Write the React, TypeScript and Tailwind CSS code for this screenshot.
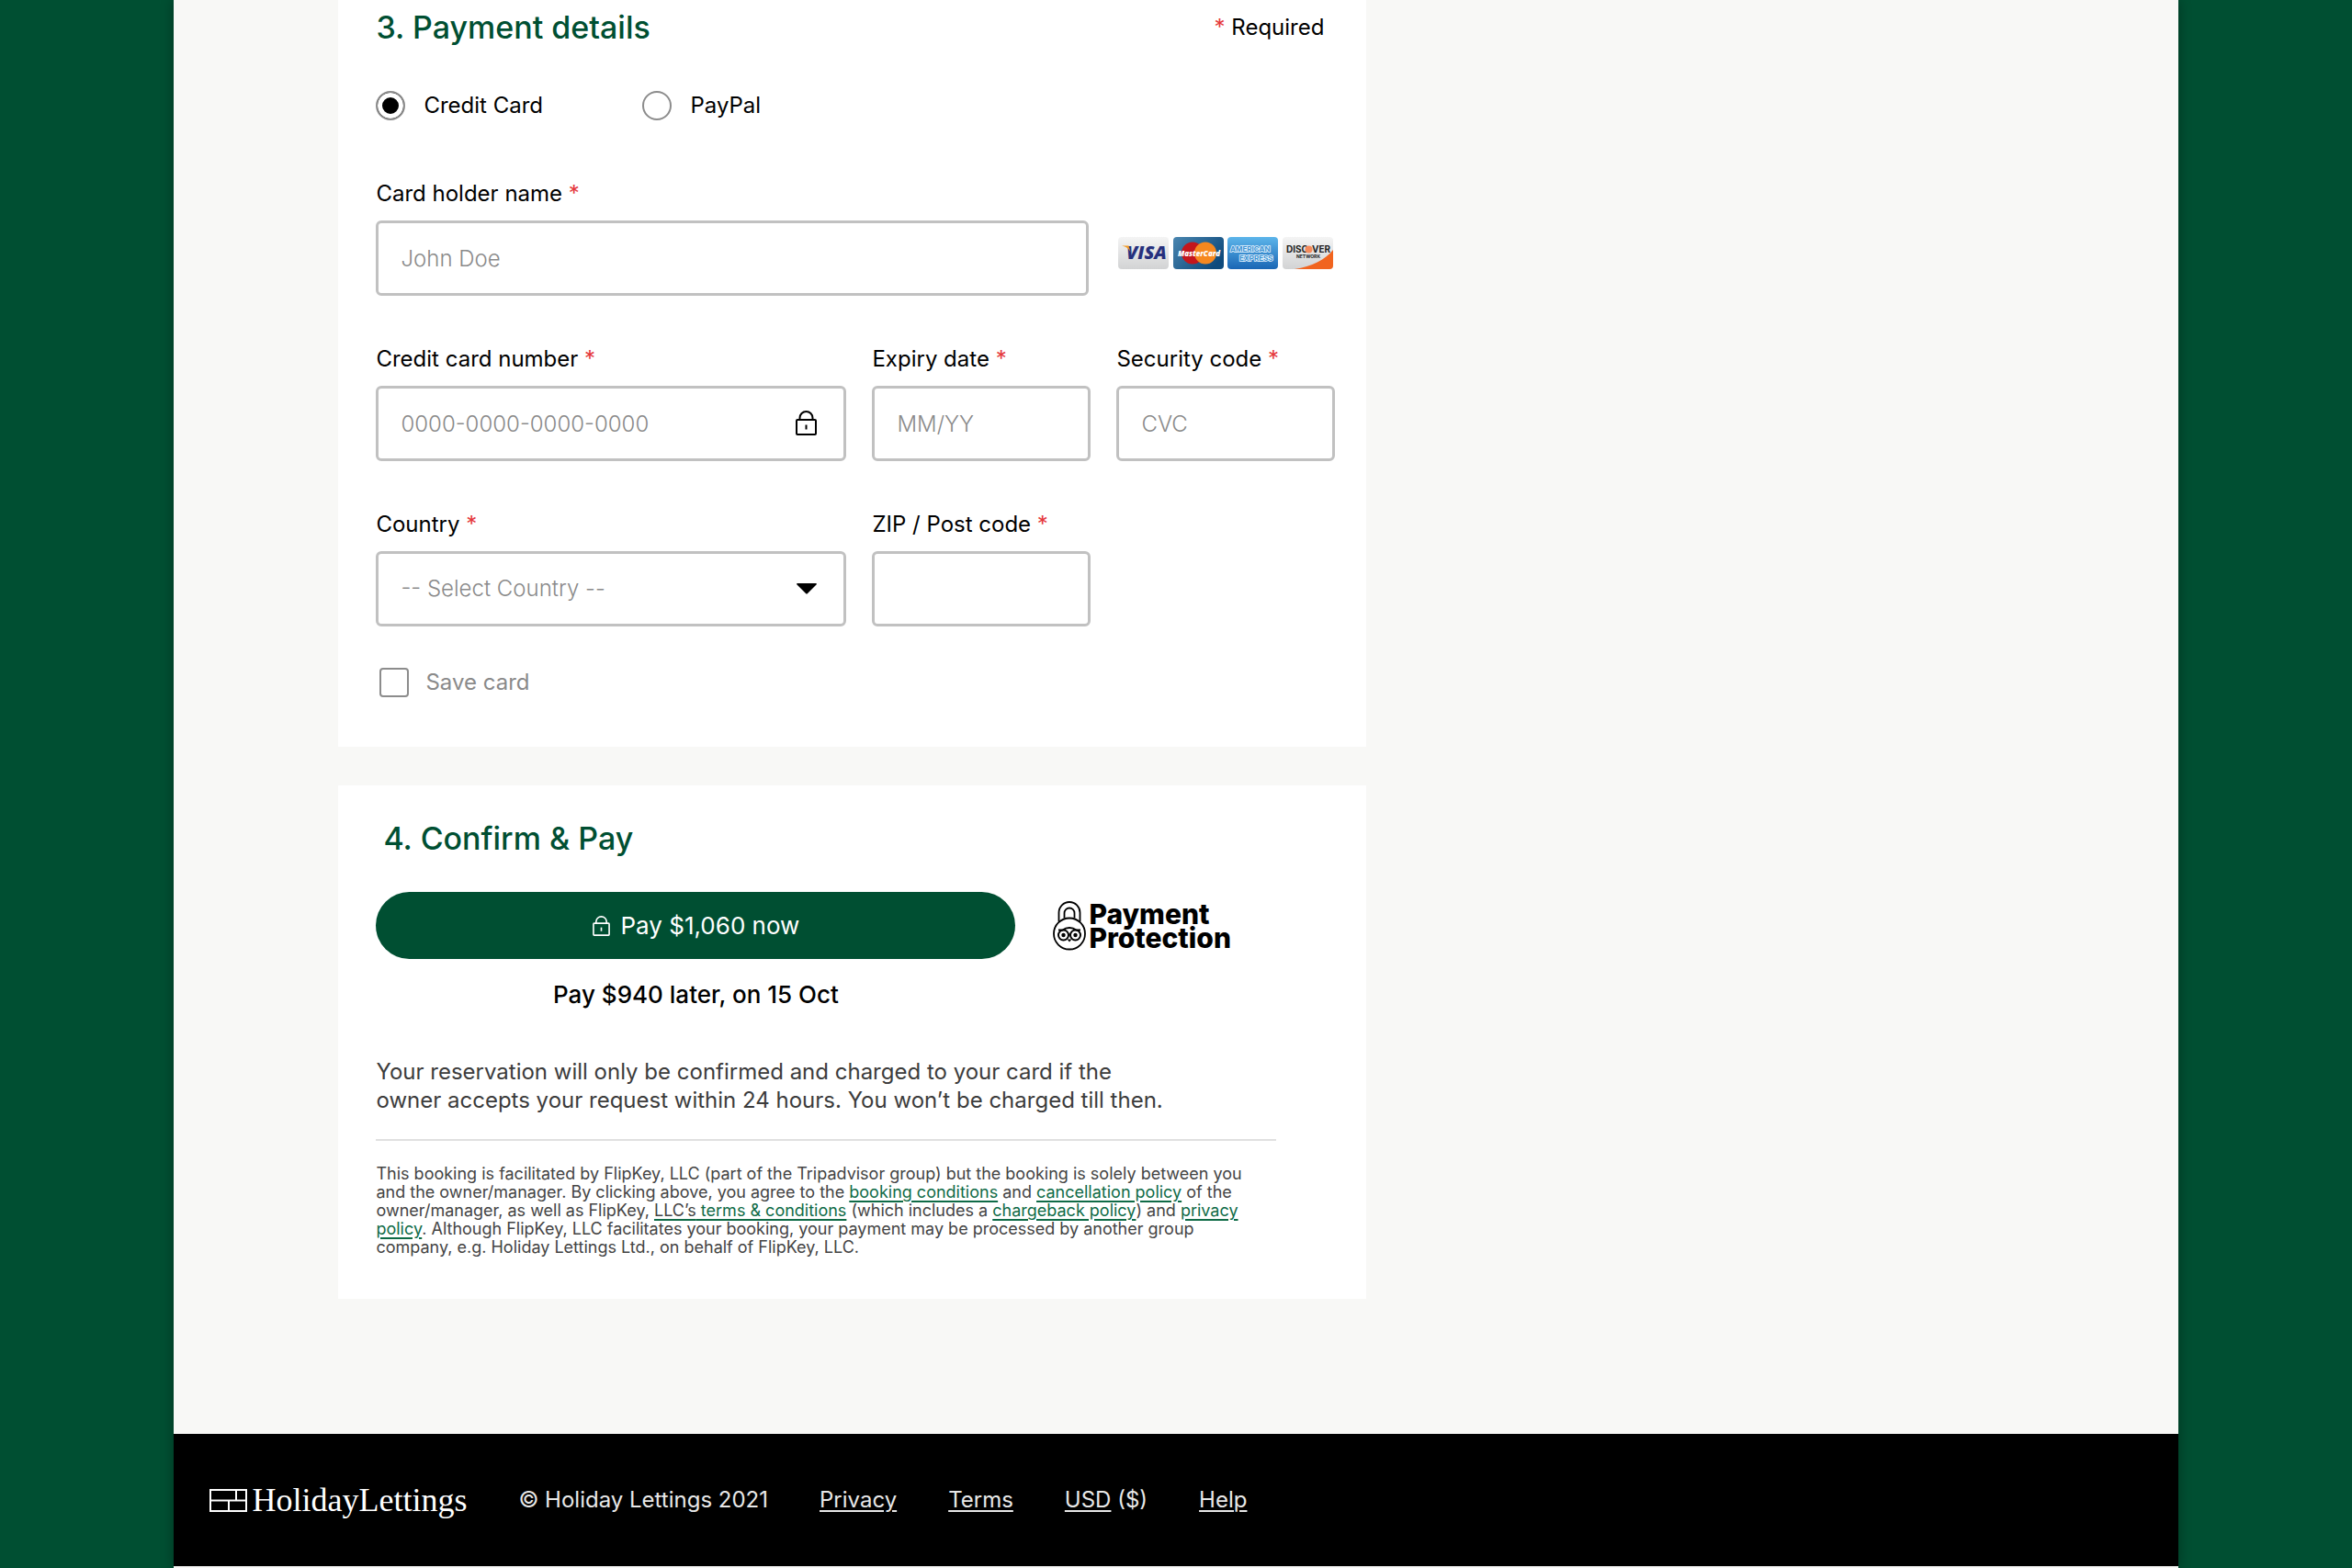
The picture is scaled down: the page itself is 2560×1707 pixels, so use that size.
import type { ReactNode } from "react";

const inputStyle =
  "h-[82px] w-full rounded-md border-3 border-[#c1c1c1] bg-transparent px-6 text-[24px] font-light text-[#8a8a8a] placeholder:text-[#8a8a8a] outline-none";

const footerLinks = ["Privacy", "Terms", "USD", "Help"];

const Star = () => <span className="text-[#e5383b]">*</span>;

const LockIcon = ({ className }: { className: string }) => (
  <svg
    viewBox="0 0 23 27"
    fill="none"
    stroke="currentColor"
    strokeWidth="2"
    strokeLinejoin="round"
    className={className}
    aria-hidden="true">
    <rect x="1" y="10" width="21" height="16" rx="1" />
    <path d="M4.5 10V8a7 7 0 0 1 14 0v2" />
    <path d="M11.5 15.5v5" />
  </svg>
);

const Field = ({
  id,
  label,
  children,
}: {
  id: string;
  label: string;
  children: ReactNode;
}) => (
  <div className="flex flex-col gap-[15px]">
    <label htmlFor={id} className="text-[24px] leading-7">
      {label} <Star />
    </label>
    {children}
  </div>
);

const CardLogos = () => (
  <svg viewBox="0 0 236 36" className="h-9 w-[236px]" role="img" aria-label="Accepted cards">
    <defs>
      <linearGradient id="silver" x1="0" y1="0" x2="0" y2="1">
        <stop offset="0" stopColor="#f4f4f4" />
        <stop offset="1" stopColor="#d2d3d4" />
      </linearGradient>
      <linearGradient id="navy" x1="0" y1="0" x2="1" y2="0.6">
        <stop offset="0" stopColor="#4a86b0" />
        <stop offset="1" stopColor="#0e4a7c" />
      </linearGradient>
      <linearGradient id="sky" x1="0" y1="0" x2="0" y2="1">
        <stop offset="0" stopColor="#5cb5ea" />
        <stop offset="1" stopColor="#1a66b5" />
      </linearGradient>
      <clipPath id="discover">
        <rect x="179" width="55" height="35" rx="4" />
      </clipPath>
    </defs>
    {/* Visa */}
    <rect width="55" height="35" rx="4" fill="url(#silver)" />
    <text
      x="9"
      y="24"
      fontFamily="Open Sans, sans-serif"
      fontSize="20"
      fontWeight="800"
      fontStyle="italic"
      fill="#26307d">
      VISA
    </text>
    <path d="M4 9.500h7.500l2 7C12 13 9 10.500 4 9.500z" fill="#f19a22" />
    {/* MasterCard */}
    <rect x="60" width="55" height="35" rx="4" fill="url(#navy)" />
    <circle cx="81" cy="17.500" r="12" fill="#c4161c" />
    <circle cx="95" cy="17.500" r="12" fill="#f6881f" />
    <text
      x="88"
      y="21"
      textAnchor="middle"
      fontFamily="Open Sans, sans-serif"
      fontSize="8"
      fontWeight="800"
      fontStyle="italic"
      fill="#fff">
      MasterCard
    </text>
    {/* American Express */}
    <rect x="119" width="55" height="35" rx="4" fill="url(#sky)" />
    <g
      fontFamily="Inter, sans-serif"
      fontSize="9"
      fontWeight="700"
      fill="#3e93d3"
      stroke="#e8f5ff"
      strokeWidth="1.500"
      paintOrder="stroke">
      <text x="122" y="16" fontSize="8">
        AMERICAN
      </text>
      <text x="132" y="26" fontSize="8">
        EXPRESS
      </text>
    </g>
    {/* Discover */}
    <g clipPath="url(#discover)">
      <rect x="179" width="55" height="35" fill="url(#silver)" />
      <path d="M234 14v21h-42c19-3 33-10 42-21z" fill="#f1641f" />
    </g>
    <g fontFamily="Inter, sans-serif" fontWeight="700" fill="#222">
      <text x="183" y="17" fontSize="10">
        DISC
      </text>
      <text x="211" y="17" fontSize="10">
        VER
      </text>
      <text x="194" y="23" fontSize="5">
        NETWORK
      </text>
    </g>
    <circle cx="207.500" cy="13.500" r="4" fill="#f58a5c" />
  </svg>
);

const PaymentProtection = () => (
  <div className="flex items-center gap-[3px]">
    <svg viewBox="0 0 36 54" className="h-[54px] w-9" fill="none" stroke="#000" aria-hidden="true">
      <path d="M6.500 22V12.500a11.500 11.500 0 0 1 23 0V22" strokeWidth="1.800" />
      <path d="M12.500 18.500V13a5.500 5.500 0 0 1 11 0v5.500" strokeWidth="1.800" />
      <circle cx="18" cy="35.500" r="17" strokeWidth="1.800" fill="#fff" />
      <path d="M6 31.500h4.500c4.500-3.500 10.500-3.500 15 0H30" strokeWidth="2" />
      <circle cx="11.500" cy="37" r="5.500" strokeWidth="2" />
      <circle cx="24.500" cy="37" r="5.500" strokeWidth="2" />
      <circle cx="11.500" cy="37" r="2.200" fill="#000" stroke="none" />
      <circle cx="24.500" cy="37" r="2.200" fill="#000" stroke="none" />
      <path d="M15.500 41.500l2.500 3 2.500-3z" fill="#000" stroke="none" />
    </svg>
    <p className="text-[30px] leading-[26px] font-extrabold">
      Payment
      <br />
      Protection
    </p>
  </div>
);

const PaymentMethod = ({ label, checked }: { label: string; checked?: boolean }) => (
  <label className="flex items-center gap-5 text-[24px] leading-8">
    <input
      type="radio"
      name="method"
      defaultChecked={checked}
      className="size-8 appearance-none rounded-full border-2 border-[#8c8c8c] bg-white checked:bg-black checked:shadow-[inset_0_0_0_5px_#fff]"
    />
    {label}
  </label>
);

const PolicyLink = ({ children }: { children: ReactNode }) => (
  <a href="#" className="text-[#0f6b47] underline decoration-2 underline-offset-3">
    {children}
  </a>
);

const PaymentDetails = () => (
  <section className="bg-white pt-2.5 pr-[34px] pb-[54px] pl-[41px]">
    <div className="flex items-center justify-between pr-3">
      <h2 className="text-[34px] leading-10 font-medium text-[#004f32]">3. Payment details</h2>
      <p className="text-[24px] leading-8">
        <Star /> Required
      </p>
    </div>
    <div className="mt-[49px] grid grid-cols-[290px_1fr]">
      <PaymentMethod label="Credit Card" checked />
      <PaymentMethod label="PayPal" />
    </div>
    <form className="mt-[66px] flex flex-col gap-[55px]">
      <div className="grid grid-cols-[1fr_236px] items-end gap-8">
        <Field id="holder" label="Card holder name">
          <input id="holder" placeholder="John Doe" className={inputStyle} />
        </Field>
        <div className="pb-7">
          <CardLogos />
        </div>
      </div>
      <div className="grid grid-cols-[1fr_238px_238px] gap-x-7">
        <Field id="number" label="Credit card number">
          <div className="relative">
            <input id="number" placeholder="0000-0000-0000-0000" className={inputStyle} />
            <LockIcon className="absolute top-[27px] right-8 h-[27px] w-[23px]" />
          </div>
        </Field>
        <Field id="expiry" label="Expiry date">
          <input id="expiry" placeholder="MM/YY" className={inputStyle} />
        </Field>
        <Field id="cvc" label="Security code">
          <input id="cvc" placeholder="CVC" className={inputStyle} />
        </Field>
      </div>
      <div className="grid grid-cols-[1fr_238px_238px] gap-x-7">
        <Field id="country" label="Country">
          <div className="relative">
            <select id="country" className={`${inputStyle} appearance-none`}>
              <option>-- Select Country --</option>
            </select>
            <svg
              viewBox="0 0 22 12"
              className="pointer-events-none absolute top-[35px] right-8 h-3 w-[22px]"
              aria-hidden="true">
              <path d="M1 0h20q1.500.5.500 1.500l-9.500 9.500q-1 1-2 0L.5 1.500Q-.5.5 1 0z" />
            </svg>
          </div>
        </Field>
        <Field id="zip" label="ZIP / Post code">
          <input id="zip" className={inputStyle} />
        </Field>
      </div>
    </form>
    <label className="mt-[45px] ml-1 flex w-fit items-center gap-[18px] text-[24px] leading-8 text-[#8a8a8a]">
      <input
        type="checkbox"
        className="size-8 appearance-none rounded-sm border-2 border-[#8c8c8c] bg-white"
      />
      Save card
    </label>
  </section>
);

const ConfirmAndPay = () => (
  <section className="mt-[42px] bg-white pt-[38px] pr-[34px] pb-[46px] pl-[41px]">
    <h2 className="ml-2 text-[34px] leading-10 font-medium text-[#004f32]">4. Confirm &amp; Pay</h2>
    <div className="mt-[38px] grid grid-cols-[696px_1fr] items-center gap-x-[41px]">
      <button className="flex h-[73px] items-center justify-center gap-3 rounded-full bg-[#004f32] text-[26px] text-white">
        <LockIcon className="h-[22px] w-[19px]" />
        Pay $1,060 now
      </button>
      <PaymentProtection />
      <p className="mt-[23px] text-center text-[26px] leading-8 font-medium">
        Pay $940 later, on 15 Oct
      </p>
    </div>
    <p className="mt-[52px] text-[24px] leading-[31px] text-[#3c3c3c]">
      Your reservation will only be confirmed and charged to your card if the
      <br />
      owner accepts your request within 24 hours. You won’t be charged till then.
    </p>
    <div className="mt-[27px] max-w-[980px] border-t-2 border-[#e0e0e0] pt-[26px] text-[18px] leading-5 text-[#444]">
      This booking is facilitated by FlipKey, LLC (part of the Tripadvisor group) but the booking is
      solely between you
      <br />
      and the owner/manager. By clicking above, you agree to the{" "}
      <PolicyLink>booking conditions</PolicyLink> and <PolicyLink>cancellation policy</PolicyLink>{" "}
      of the
      <br />
      owner/manager, as well as FlipKey,{" "}
      <PolicyLink>
        <span className="text-[#444]">LLC’s</span> terms &amp; conditions
      </PolicyLink>{" "}
      (which includes a <PolicyLink>chargeback policy</PolicyLink>) and{" "}
      <PolicyLink>
        privacy
        <br />
        policy
      </PolicyLink>
      . Although FlipKey, LLC facilitates your booking, your payment may be processed by another
      group
      <br />
      company, e.g. Holiday Lettings Ltd., on behalf of FlipKey, LLC.
    </div>
  </section>
);

const Footer = () => (
  <footer className="flex h-36 items-center gap-14 bg-black px-[39px] text-[24px] text-[#e8e8e8]">
    <a href="#" className="flex items-center gap-[5px] text-white">
      <svg
        viewBox="0 0 41 25"
        fill="none"
        stroke="currentColor"
        strokeWidth="2"
        className="h-[25px] w-[41px]"
        aria-hidden="true">
        <path d="M1 1h39v23H1zM1 12.500h39M29 1v11.500M21 12.500V24" />
      </svg>
      <span className="font-['Liberation_Serif',serif] text-[36px] leading-10">
        HolidayLettings
      </span>
    </a>
    <p>© Holiday Lettings 2021</p>
    {footerLinks.map(link => (
      <span key={link}>
        <a href="#" className="underline decoration-2 underline-offset-3">
          {link}
        </a>
        {link === "USD" && " ($)"}
      </span>
    ))}
  </footer>
);

const App = () => {
  return (
    <div className="flex min-h-screen justify-center bg-[#004f32] font-[Inter,sans-serif] text-black">
      <div className="flex w-[85.2%] flex-col bg-[#f8f8f6] shadow-[0_0_12px_rgba(0,0,0,0.35)]">
        <main className="mb-[147px] ml-[179px] max-w-[1119px]">
          <PaymentDetails />
          <ConfirmAndPay />
        </main>
        <Footer />
      </div>
    </div>
  );
};

export default App;
